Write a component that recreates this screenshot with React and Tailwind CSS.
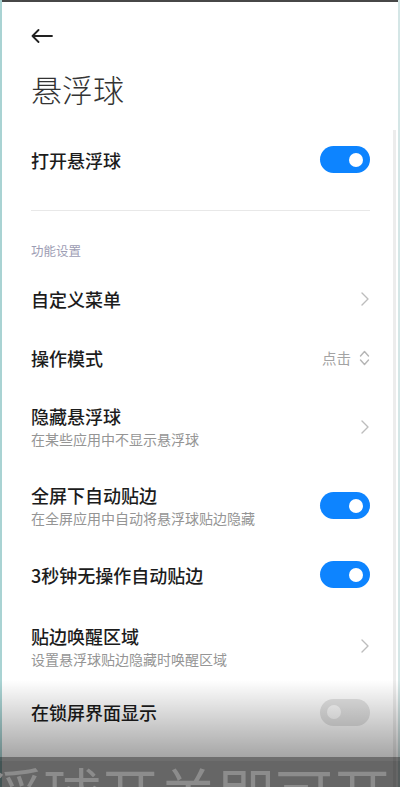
// Floating ball settings screen (MIUI style)

import React from 'react';

const Toggle = ({ on }) => (
    <div className={`relative w-[50px] h-[27px] rounded-full shrink-0 ${on ? 'bg-[#0d84ff]' : 'bg-[#e4e4e4]'}`}>
        <div className={`absolute top-[6.5px] w-[14px] h-[14px] rounded-full ${on ? 'right-[7px] bg-white' : 'left-[7px] bg-[#fbfbfb]'}`} />
    </div>
);

const Chevron = () => (
    <svg width="8" height="14" viewBox="0 0 8 14" fill="none" className="shrink-0 mr-[1px]">
        <path d="M1 1l6 6-6 6" stroke="#bdbdbd" strokeWidth="1.4" strokeLinecap="round" strokeLinejoin="round" />
    </svg>
);

const UpDown = () => (
    <svg width="11" height="16" viewBox="0 0 11 16" fill="none" className="shrink-0">
        <path d="M1.5 6l4-4.5 4 4.5" stroke="#b5b5b5" strokeWidth="1.4" strokeLinecap="round" strokeLinejoin="round" />
        <path d="M1.5 10l4 4.5 4-4.5" stroke="#b5b5b5" strokeWidth="1.4" strokeLinecap="round" strokeLinejoin="round" />
    </svg>
);

// one settings row; height is given per row so things line up with the screen
const Row = ({ title, sub, right, h }) => (
    <div className={`flex items-center justify-between ${h}`}>
        <div className="flex flex-col gap-[5px]">
            <span className="text-[18px] leading-[20px] font-medium text-[#1c1c1c]">{title}</span>
            {sub && <span className="text-[14px] leading-[16px] text-[#959595]">{sub}</span>}
        </div>
        {right}
    </div>
);

const App = () => {
    return (
        <div className="relative w-[400px] h-[787px] overflow-hidden bg-white font-['Noto_Sans_CJK_SC','Noto_Sans',sans-serif]">
            {/* window edges */}
            <div className="absolute top-0 left-0 right-0 h-[2px] bg-[#474747]" />
            <div className="absolute top-0 bottom-0 left-0 w-[2px] bg-[#a9d3d3]" />
            <div className="absolute top-0 bottom-0 right-0 w-[2px] bg-[#d4e6e6]" />
            <div className="absolute top-[130px] bottom-0 right-[4px] w-[3px] bg-[#ececec]" />

            <div className="pl-[31px] pr-[30px] pt-[29px]">
                {/* back arrow */}
                <svg width="22" height="14" viewBox="0 0 22 14" fill="none" className="block">
                    <path d="M21 7H1.5M7.5 1L1.5 7l6 6" stroke="#222" strokeWidth="1.8" strokeLinecap="round" strokeLinejoin="round" />
                </svg>

                <h1 className="mt-[26px] text-[31px] leading-[40px] font-light text-[#333]">悬浮球</h1>

                <div className="mt-[21px]">
                    <Row title="打开悬浮球" h="h-[59px]" right={<Toggle on />} />
                </div>

                <div className="mt-[21px] h-px bg-[#e8e8e8]" />

                <div className="mt-[32px] text-[12.5px] leading-[16px] text-[#9d9db4]">功能设置</div>

                <div className="mt-[10px]">
                    <Row title="自定义菜单" h="h-[59px]" right={<Chevron />} />
                    <Row
                        title="操作模式"
                        h="h-[59px]"
                        right={
                            <div className="flex items-center gap-[8px]">
                                <span className="text-[14.5px] text-[#a3a3a3]">点击</span>
                                <UpDown />
                            </div>
                        }
                    />
                    <Row title="隐藏悬浮球" sub="在某些应用中不显示悬浮球" h="h-[79px]" right={<Chevron />} />
                    <Row title="全屏下自动贴边" sub="在全屏应用中自动将悬浮球贴边隐藏" h="h-[79px]" right={<Toggle on />} />
                    <Row title="3秒钟无操作自动贴边" h="h-[59px]" right={<Toggle on />} />
                    <Row title="贴边唤醒区域" sub="设置悬浮球贴边隐藏时唤醒区域" h="h-[84px]" right={<Chevron />} />
                    <Row title="在锁屏界面显示" h="h-[48px]" right={<Toggle on={false} />} />
                </div>
            </div>

            {/* video caption overlay at the bottom */}
            <div className="absolute left-0 right-0 top-[680px] h-[77px] bg-gradient-to-b from-black/0 to-black/35" />
            <div className="absolute left-0 right-0 top-[757px] bottom-0 bg-black/60 overflow-hidden">
                <div className="h-[4px] bg-white/5" />
                <div className="absolute left-[-15px] top-[6px] whitespace-nowrap text-[58px] leading-[58px] text-[#8c8c8c]">
                    浮球开关即可开
                </div>
            </div>
        </div>
    );
};

export default App;
